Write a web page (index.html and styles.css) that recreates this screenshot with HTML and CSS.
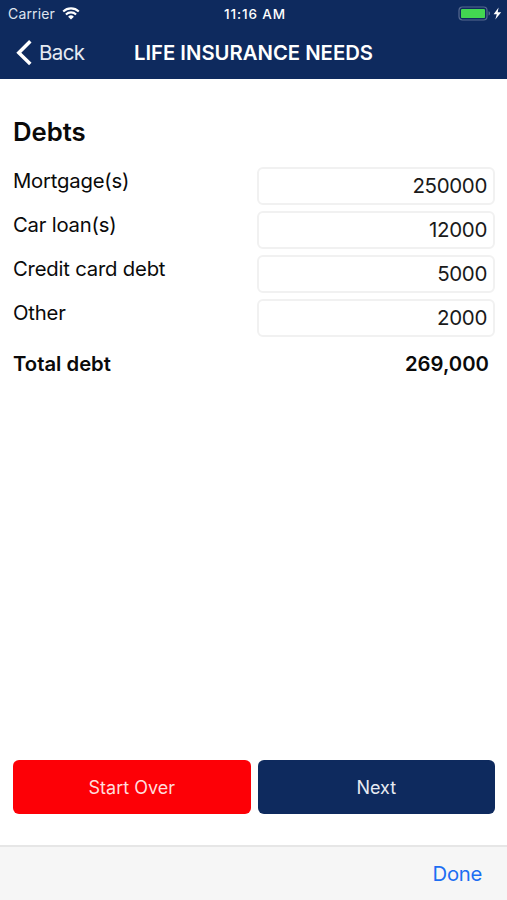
FILE: index.html
```html
<!DOCTYPE html>
<html lang="en">
<head>
  <meta charset="UTF-8">
  <title>Life Insurance Needs</title>
  <meta name="viewport" content="width=device-width, initial-scale=1.0">
  <link rel="stylesheet" href="styles.css">
</head>
<body>
  <header class="header">
    <div class="status-bar">
      <div class="carrier">
        <span class="carrier-name">Carrier</span>
        <svg class="wifi" width="18" height="13" viewBox="0 0 18 13">
          <path d="M1.2 4.5a11.3 11.3 0 0 1 15.6 0M3.9 7.4a7.4 7.4 0 0 1 10.2 0" fill="none" stroke="#fff" stroke-width="2.1"/>
          <path d="M9 12.6 6.1 9.7a4.2 4.2 0 0 1 5.8 0z" fill="#fff"/>
        </svg>
      </div>
      <span class="time">11:16 AM</span>
      <div class="battery">
        <svg width="44" height="16" viewBox="0 0 44 16">
          <rect x="1" y="1" width="28" height="13" rx="3.4" fill="none" stroke="#56698f" stroke-width="1.2"/>
          <rect x="3" y="2.9" width="24" height="9.2" rx="1.2" fill="#43d651"/>
          <path d="M30.6 5.3c1.7.5 1.7 3.8 0 4.3z" fill="#66799b"/>
          <path d="M40.6 1.4 35.6 8.2h3.2L37.3 13.6l5.9-7.4h-3.5z" fill="#fff"/>
        </svg>
      </div>
    </div>
    <nav class="nav">
      <a class="back">
        <svg width="16" height="26" viewBox="0 0 16 26">
          <path d="M14.3 1.3 2.8 12.7l11.5 11.4" fill="none" stroke="#fff" stroke-width="3.5"/>
        </svg>
        <span class="back-text">Back</span>
      </a>
      <h1>LIFE INSURANCE NEEDS</h1>
    </nav>
  </header>

  <form class="debts">
    <h2>Debts</h2>
    <div class="row">
      <label for="mortgage">Mortgage(s)</label>
      <input type="text" id="mortgage" value="250000">
    </div>
    <div class="row">
      <label for="car">Car loan(s)</label>
      <input type="text" id="car" value="12000">
    </div>
    <div class="row">
      <label for="card">Credit card debt</label>
      <input type="text" id="card" value="5000">
    </div>
    <div class="row">
      <label for="other">Other</label>
      <input type="text" id="other" value="2000">
    </div>
    <div class="total">
      <span>Total debt</span>
      <span>269,000</span>
    </div>
    <div class="buttons">
      <button type="button" class="btn btn-red">Start Over</button>
      <button type="button" class="btn btn-blue">Next</button>
    </div>
  </form>

  <footer class="toolbar">
    <a class="done">Done</a>
  </footer>
</body>
</html>
```
FILE: styles.css
```css
* {
  box-sizing: border-box;
}

body {
  margin: 0;
  height: 100vh;
  display: flex;
  flex-direction: column;
  background: #fff;
  color: #0a0a0a;
  font-family: Inter, sans-serif;
}

.header {
  height: 79px;
  background: #0e2a5e;
  color: #fff;
}

.status-bar {
  height: 27px;
  padding: 0 5px 0 8px;
  display: grid;
  grid-template-columns: 1fr auto 1fr;
  align-items: center;
  font-size: 14px;
}

.carrier {
  display: flex;
  align-items: center;
  gap: 7px;
}

.carrier-name {
  color: #dfe4ee;
  letter-spacing: 0.15px;
}

.time {
  font-weight: 500;
  letter-spacing: 0.9px;
  font-size: 13.5px;
}

.battery {
  display: flex;
  justify-content: flex-end;
}

.nav {
  height: 51px;
  padding: 0 16px;
  display: grid;
  grid-template-columns: 1fr auto 1fr;
  align-items: center;
}

.back {
  display: flex;
  align-items: center;
  gap: 7px;
  font-size: 20.5px;
  letter-spacing: -0.6px;
  color: #e6eaf2;
}

.nav h1 {
  margin: 0;
  font-size: 20.3px;
  font-weight: 600;
}

.debts {
  flex: 1;
  display: flex;
  flex-direction: column;
  padding: 37px 12px 31px 13px;
}

.debts h2 {
  margin: 0 0 19px;
  font-size: 25.7px;
  line-height: 32px;
  font-weight: 600;
}

.row {
  display: flex;
  justify-content: space-between;
  height: 38px;
  margin-bottom: 6px;
}

.row label {
  font-size: 20.3px;
  line-height: 27px;
  letter-spacing: -0.2px;
}

.row input {
  width: 238px;
  height: 38px;
  padding: 0 6px 2px;
  border: 2px solid #f1f1f1;
  border-radius: 6px;
  background: #fff;
  color: #1a1a1a;
  font-family: inherit;
  font-size: 20.5px;
  letter-spacing: -0.35px;
  text-align: right;
}

.total {
  display: flex;
  justify-content: space-between;
  margin-top: 6px;
  padding-right: 6px;
  font-size: 20.3px;
  line-height: 30px;
  font-weight: 600;
}

.buttons {
  display: flex;
  gap: 7px;
  margin-top: auto;
}

.btn {
  flex: 1;
  height: 54px;
  padding: 0;
  border: none;
  border-radius: 6px;
  font-family: inherit;
  font-size: 18px;
}

.btn-red {
  background: #fd0006;
  color: #ffdcdc;
}

.btn-blue {
  background: #0e2a5e;
  color: #e6eaf2;
}

.toolbar {
  height: 55px;
  padding: 0 25px;
  display: flex;
  align-items: center;
  justify-content: flex-end;
  background: #f6f6f6;
  border-top: 2px solid #e6e6e6;
}

.done {
  color: #1c6ef2;
  font-size: 20.3px;
  letter-spacing: -0.3px;
}
```
